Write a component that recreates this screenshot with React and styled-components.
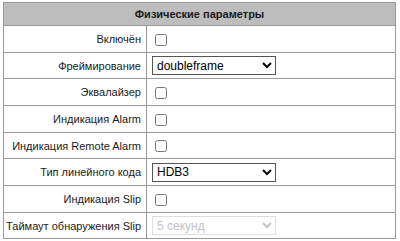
import React from "react";
import styled, { createGlobalStyle } from "styled-components";

const GlobalStyle = createGlobalStyle`
  html, body {
    margin: 0;
    padding: 0;
    background: #fff;
  }
  body {
    font-family: "Liberation Sans", Arial, sans-serif;
  }
`;

const Page = styled.div`
  padding: 2px 5px 0 3px;
`;

const Table = styled.table`
  width: 393px;
  border-collapse: collapse;
  border: 1px solid #999;
  font-size: 11px;
  color: #1a1a1a;
`;

const HeadCell = styled.th`
  height: 22px;
  padding: 0;
  background: #bdbdbd;
  border: 1px solid #999;
  font-weight: bold;
  text-align: center;
  font-size: 11px;
  color: #1a1a1a;
`;

const Row = styled.tr`
  height: ${(p) => p.$h}px;
`;

const Label = styled.td`
  width: 137px;
  padding: 0 5px 0 0;
  text-align: right;
  border: 1px solid #999;
  white-space: nowrap;
`;

const Field = styled.td`
  padding: 0 0 0 5px;
  border: 1px solid #999;
`;

const Check = styled.input.attrs({ type: "checkbox" })`
  margin: 0 0 0 3px;
  width: 12px;
  height: 12px;
  vertical-align: middle;
`;

const Select = styled.select`
  width: 124px;
  height: 19px;
  margin: 0;
  border: 1px solid ${(p) => (p.disabled ? "#d0d0d0" : "#555")};
  border-radius: 0;
  background-color: #fff;
  font-family: "Liberation Sans", Arial, sans-serif;
  font-size: 12px;
  color: ${(p) => (p.disabled ? "#aaa" : "#000")};
  vertical-align: middle;
`;

const rows = [
  { label: "Включён", type: "check", h: 27 },
  { label: "Фреймирование", type: "select", value: "doubleframe", h: 26 },
  { label: "Эквалайзер", type: "check", h: 27 },
  { label: "Индикация Alarm", type: "check", h: 27 },
  { label: "Индикация Remote Alarm", type: "check", h: 26 },
  { label: "Тип линейного кода", type: "select", value: "HDB3", h: 27 },
  { label: "Индикация Slip", type: "check", h: 27 },
  { label: "Таймаут обнаружения Slip", type: "select", value: "5 секунд", disabled: true, h: 26 },
];

export default function App() {
  return (
    <>
      <GlobalStyle />
      <Page>
        <Table>
          <thead>
            <tr>
              <HeadCell colSpan={2}>Физические параметры</HeadCell>
            </tr>
          </thead>
          <tbody>
            {rows.map((r) => (
              <Row key={r.label} $h={r.h}>
                <Label>{r.label}</Label>
                <Field>
                  {r.type === "check" ? (
                    <Check />
                  ) : (
                    <Select defaultValue={r.value} disabled={r.disabled}>
                      <option>{r.value}</option>
                    </Select>
                  )}
                </Field>
              </Row>
            ))}
          </tbody>
        </Table>
      </Page>
    </>
  );
}
